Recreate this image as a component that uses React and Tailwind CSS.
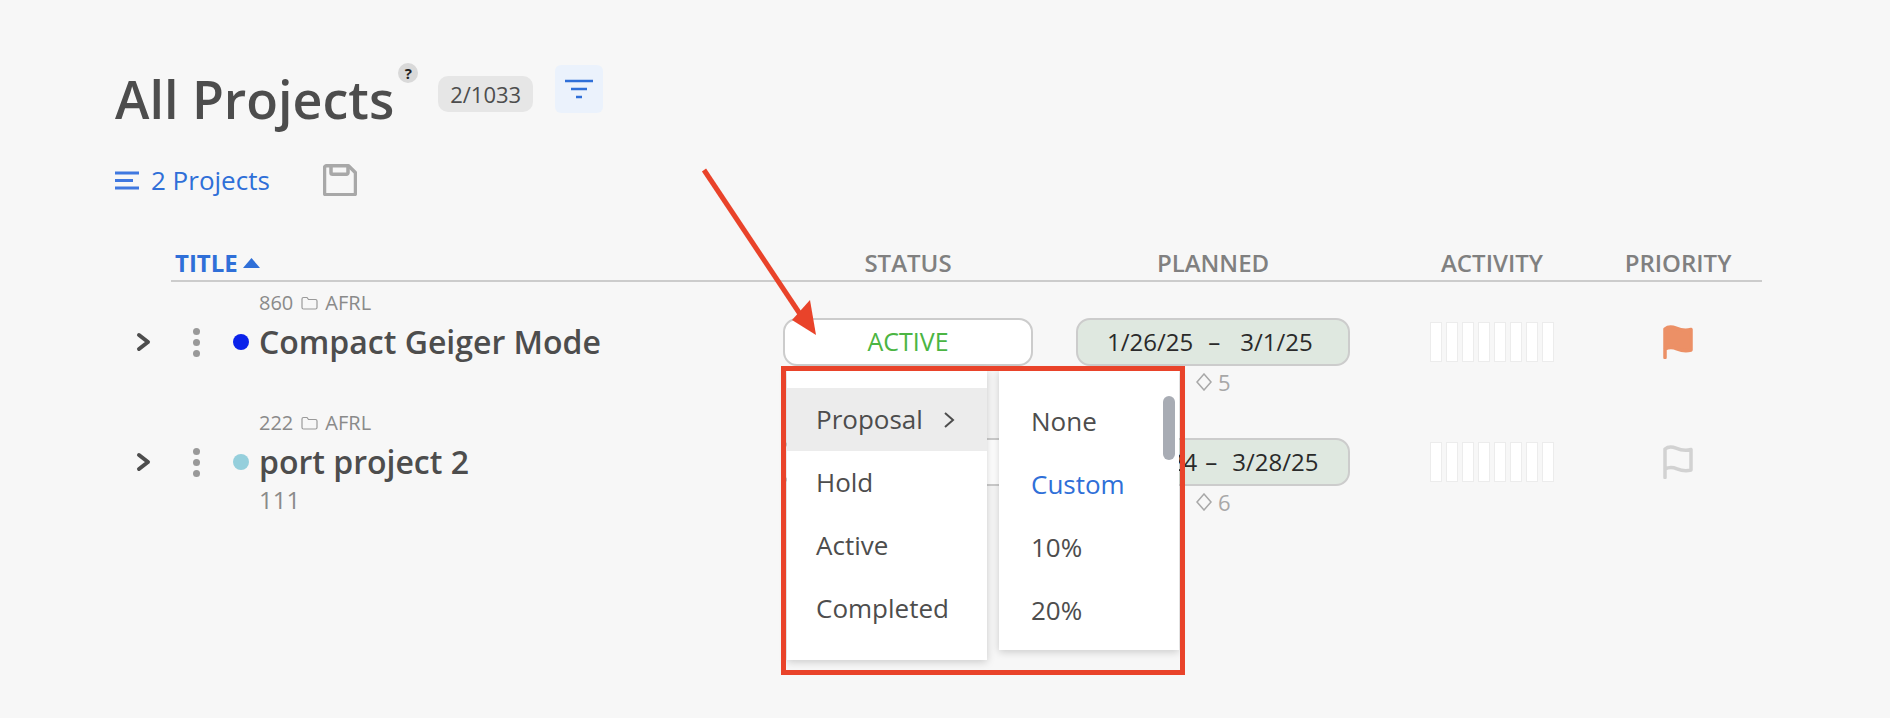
import React from "react";

const Folder = () => (
  <svg width="17" height="14" viewBox="0 0 17 14" fill="none" stroke="#9a9a9a" strokeWidth="1.2">
    <path d="M1 3a1.500 1.500 0 0 1 1.500-1.500h3.500L7.500 3.500h7A1.500 1.500 0 0 1 16 5v6.500a1.500 1.500 0 0 1-1.500 1.500h-12A1.500 1.500 0 0 1 1 11.500z" />
  </svg>
);

const Chevron = () => (
  <svg width="15" height="20" viewBox="0 0 15 20" fill="none" stroke="#4d4d4d" strokeWidth="4" strokeLinecap="round" strokeLinejoin="round">
    <path d="M3 3l9 7-9 7" />
  </svg>
);

const Dots = () => (
  <div className="flex flex-col items-center gap-[4px]">
    <span className="w-[7px] h-[7px] rounded-full bg-[#999999]" />
    <span className="w-[7px] h-[7px] rounded-full bg-[#999999]" />
    <span className="w-[7px] h-[7px] rounded-full bg-[#999999]" />
  </div>
);

const Diamond = () => (
  <svg width="16" height="18" viewBox="0 0 16 18" fill="none" stroke="#a8a8a8" strokeWidth="1.500">
    <path d="M8 1l7 8-7 8-7-8z" />
  </svg>
);

const Flag = ({ filled }) => (
  <svg width="30" height="34" viewBox="0 0 30 34">
    <path
      d="M2 32.500V4c3-2.500 7-2.500 11-.800s9 3 15 1.300v20.500c-6 1.700-10 .500-14-1.200s-8-2-12 .200"
      fill={filled ? "#ec9066" : "none"}
      stroke={filled ? "#ec9066" : "#d2d2d2"}
      strokeWidth="3.500"
      strokeLinecap="round"
      strokeLinejoin="round"
    />
  </svg>
);

const Activity = () => (
  <div className="flex gap-[4px]">
    {[0, 1, 2, 3, 4, 5, 6, 7].map((i) => (
      <div key={i} className="w-[12px] h-[40px] bg-white border border-[#ececec]" />
    ))}
  </div>
);

const Row = ({ id, title, sub, dot, dates, count, filled }) => (
  <div className="grid grid-cols-[123px_524px_250px_43px_274px_284px_88px] grid-rows-[30px_48px_42px] text-[#4d4d4d]">
    <div className="col-start-2 row-start-1 flex items-center gap-[8px] text-[20px] text-[#8a8a8a]">
      <span>{id}</span>
      <Folder />
      <span className="-ml-[1px]">AFRL</span>
    </div>
    <div className="col-start-1 row-start-2 flex items-center">
      <Chevron />
      <div className="ml-[42px]">
        <Dots />
      </div>
      <span className={`ml-[33px] w-[16px] h-[16px] rounded-full ${dot}`} />
    </div>
    <div className="col-start-2 row-start-2 flex items-center text-[32px] font-semibold">{title}</div>
    {sub && <div className="col-start-2 row-start-3 text-[24px] leading-[28px] text-[#8a8a8a]">{sub}</div>}
    <div className="col-start-3 row-start-2 flex items-center justify-center rounded-[14px] border-2 border-[#cccccc] bg-white text-[25px] font-medium text-[#4bb543]">
      ACTIVE
    </div>
    <div className="col-start-5 row-start-2 flex items-center rounded-[14px] border-2 border-[#cccccc] bg-[#dfe8e0] text-[24px] font-medium text-[#2a2a2a]">
      {dates}
    </div>
    <div className="col-start-5 row-start-3 flex items-start gap-[6px] pl-[120px] text-[22px] leading-[32px] text-[#a8a8a8]">
      <span className="mt-[7px]">
        <Diamond />
      </span>
      <span>{count}</span>
    </div>
    <div className="col-start-6 row-start-2 flex items-center justify-center">
      <Activity />
    </div>
    <div className="col-start-7 row-start-2 flex items-center justify-center">
      <Flag filled={filled} />
    </div>
  </div>
);

export default function App() {
  return (
    <div className="relative h-[718px] w-full overflow-hidden bg-[#f7f7f7] font-['Open_Sans',sans-serif]">
      <div className="pl-[115px] pt-[63px]">
        <div className="flex items-start text-[#4d4d4d]">
          <h1 className="text-[52px] leading-[72px] font-semibold">All Projects</h1>
          <div className="ml-[4px] flex h-[20px] w-[20px] items-center justify-center rounded-full bg-[#d9d9d9] text-[15px] font-bold text-[#222222]">
            ?
          </div>
          <div className="ml-[20px] mt-[13px] flex h-[36px] w-[95px] items-center justify-center rounded-[10px] bg-[#e6e6e6] text-[22px]">
            2/1033
          </div>
          <div className="ml-[22px] mt-[2px] flex h-[48px] w-[48px] items-center justify-center rounded-[6px] bg-[#ebf2fc]">
            <svg width="30" height="22" viewBox="0 0 30 22" fill="none" stroke="#2f6fd8" strokeWidth="2.500">
              <path d="M1 3h28M7 11h16M12 19h6" />
            </svg>
          </div>
        </div>
        <div className="mt-[28px] flex h-[36px] items-center text-[#2f6fd8]">
          <svg className="-mt-[2px]" width="24" height="19" viewBox="0 0 24 19" fill="none" stroke="#3f78e0" strokeWidth="3">
            <path d="M0 2h24M0 9.500h18M0 17h24" />
          </svg>
          <span className="ml-[12px] -mt-[2px] text-[26px]">2 Projects</span>
          <svg className="ml-[53px] -mt-[2px]" width="34" height="32" viewBox="0 0 34 32" fill="none" stroke="#a8a8a8" strokeWidth="3.500" strokeLinejoin="round">
            <path d="M3.500 1.800h22l7 7v20a2 2 0 0 1-2 2h-27a2 2 0 0 1-2-2v-25a2 2 0 0 1 2-2z" />
            <path d="M8 1.800v7a1.500 1.500 0 0 0 1.500 1.500h14A1.500 1.500 0 0 0 25 8.800v-7" />
          </svg>
        </div>
      </div>

      <div className="ml-[171px] mt-[46px] grid h-[37px] w-[1591px] grid-cols-[612px_250px_43px_274px_284px_88px] items-center border-b-2 border-[#cccccc] pb-[4px] text-[24px] font-semibold whitespace-nowrap text-[#808080]">
        <div className="flex items-center gap-[5px] pl-[4px] font-bold text-[#2f6fd8]">
          TITLE
          <svg width="17" height="10" viewBox="0 0 17 10">
            <path d="M8.500 0l8.500 10H0z" fill="#2f6fd8" />
          </svg>
        </div>
        <div className="flex justify-center">STATUS</div>
        <div />
        <div className="flex justify-center">PLANNED</div>
        <div className="flex justify-center">ACTIVITY</div>
        <div className="flex justify-center">PRIORITY</div>
      </div>

      <div className="ml-[136px] mt-[6px]">
        <Row
          id="860"
          title="Compact Geiger Mode"
          dot="bg-[#0a22ea]"
          dates={
            <div className="flex gap-[15px] pl-[29px]">
              <span>1/26/25</span>
              <span className="mr-[5px]">–</span>
              <span>3/1/25</span>
            </div>
          }
          count="5"
          filled
        />
        <Row
          id="222"
          title="port project 2"
          sub="111"
          dot="bg-[#95cfdc]"
          dates={
            <div className="flex gap-[8px] pl-[33px]">
              <span>1/12/24</span>
              <span className="mr-[7px]">–</span>
              <span>3/28/25</span>
            </div>
          }
          count="6"
        />
      </div>

      <svg className="absolute left-0 top-0" width="1890" height="718" fill="none">
        <path d="M704 170L800 314" stroke="#e9432a" strokeWidth="5" />
        <path d="M816 335L792 320L810 300z" fill="#e9432a" />
      </svg>

      <div className="absolute left-[787px] top-[370px] h-[290px] w-[200px] bg-white pt-[18px] text-[26px] text-[#4d4d4d] shadow-[0_2px_8px_rgba(0,0,0,0.18)]">
        <div className="flex h-[63px] items-center bg-[#ececec] pl-[29px]">
          Proposal
          <svg className="ml-[20px]" width="12" height="20" viewBox="0 0 12 20" fill="none" stroke="#4d4d4d" strokeWidth="2">
            <path d="M2 3l8 7-8 7" />
          </svg>
        </div>
        <div className="flex h-[63px] items-center pl-[29px]">Hold</div>
        <div className="flex h-[63px] items-center pl-[29px]">Active</div>
        <div className="flex h-[63px] items-center pl-[29px]">Completed</div>
      </div>

      <div className="absolute left-[999px] top-[370px] h-[280px] w-[180px] bg-white pt-[20px] pl-[32px] text-[26px] text-[#4d4d4d] shadow-[0_2px_8px_rgba(0,0,0,0.18)]">
        <div className="flex h-[63px] items-center">None</div>
        <div className="flex h-[63px] items-center text-[#2f6fd8]">Custom</div>
        <div className="flex h-[63px] items-center">10%</div>
        <div className="flex h-[63px] items-center">20%</div>
        <div className="absolute right-[4px] top-[26px] h-[64px] w-[12px] rounded-full bg-[#a8acb4]" />
      </div>

      <div className="absolute left-[781px] top-[366px] h-[309px] w-[404px] border-[5px] border-[#e9432a]" />
    </div>
  );
}
